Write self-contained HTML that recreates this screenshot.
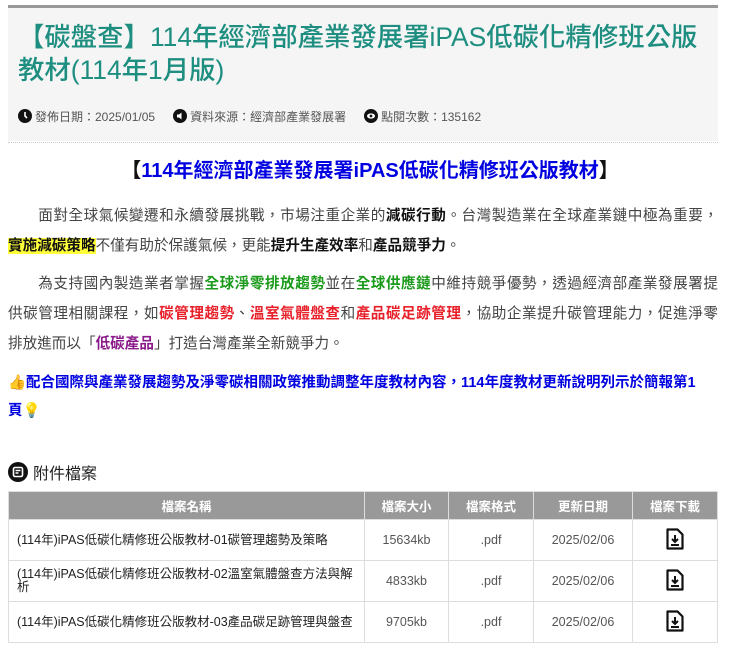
<!DOCTYPE html>
<html><head><meta charset="utf-8">
<style>
*{margin:0;padding:0;box-sizing:border-box}
body{width:740px;height:663px;background:#fff;font-family:"Liberation Sans","Noto Sans CJK TC",sans-serif;color:#333;position:relative;overflow:hidden}
.topline{position:absolute;left:8px;top:5px;width:710px;height:3px;background:#999}
.head{position:absolute;left:8px;top:8px;width:710px;height:133px;background:#f5f5f5}
.title{position:absolute;left:18px;top:21px;font-size:26.4px;line-height:33px;color:#1d8e80;font-weight:500;width:700px}
.meta{position:absolute;left:18px;top:108px;font-size:12px;color:#555;display:flex;align-items:center;height:16px}
.meta svg{margin-right:3px}
.meta span{margin-right:18px}
.dots{position:absolute;left:8px;top:142px;width:710px;border-top:1px dotted #ccc}
.h2{position:absolute;left:0;width:740px;top:157px;text-align:center;font-size:20px;font-weight:bold;color:#0000e0;line-height:28px}
.h2 b{color:#111}
.p{position:absolute;left:8px;width:710px;font-size:14.6px;color:#444}
.p div{text-align:justify;text-align-last:justify;height:30px;line-height:30px;white-space:nowrap}
.p div.l{text-align-last:left}
.k{color:#111;font-weight:bold}
.g{color:#1a9a1a;font-weight:bold}
.r{color:#e8202a;font-weight:bold}
.pu{color:#8a1a8a;font-weight:bold}
.hl{background:#ffff3a;color:#111;font-weight:bold}
.blue{position:absolute;left:8px;top:369px;width:712px;font-size:14.5px;font-weight:bold;color:#0000e0;line-height:28px}
.att{position:absolute;left:8px;top:460px;font-size:16px;color:#222;display:flex;align-items:center}
table{position:absolute;left:8px;top:491px;width:710px;border-collapse:collapse;font-size:12.5px}
th{background:#999;color:#fff;font-weight:bold;height:28px;border:1px solid #ddd;font-size:12.5px}
td{border:1px solid #ddd;height:41px;text-align:center;color:#555}
td.n{text-align:left;padding-left:8px;color:#222;line-height:13px}
</style></head><body>
<div class="topline"></div>
<div class="head"></div>
<div class="title">【碳盤查】114年經濟部產業發展署iPAS低碳化精修班公版<br>教材(114年1月版)</div>
<div class="meta">
<svg width="14" height="14" viewBox="0 0 14 14"><circle cx="7" cy="7" r="7" fill="#111"/><path d="M7 3v4l2 2" stroke="#fff" stroke-width="1.6" fill="none"/></svg><span>發佈日期：2025/01/05</span>
<svg width="14" height="14" viewBox="0 0 14 14"><circle cx="7" cy="7" r="7" fill="#111"/><path d="M4 5.5h2l2.5-2v7L6 8.5H4z" fill="#fff"/></svg><span>資料來源：經濟部產業發展署</span>
<svg width="14" height="14" viewBox="0 0 14 14"><circle cx="7" cy="7" r="7" fill="#111"/><ellipse cx="7" cy="7" rx="4" ry="2.6" fill="#fff"/><circle cx="7" cy="7" r="1.4" fill="#111"/></svg><span>點閱次數：135162</span>
</div>
<div class="dots"></div>
<div class="h2"><b>【</b>114年經濟部產業發展署iPAS低碳化精修班公版教材<b>】</b></div>
<div class="p" style="top:201px">
<div>&#12288;&#12288;面對全球氣候變遷和永續發展挑戰，市場注重企業的<span class="k">減碳行動</span>。台灣製造業在全球產業鏈中極為重要，</div>
<div class="l"><span class="hl">實施減碳策略</span>不僅有助於保護氣候，更能<span class="k">提升生產效率</span>和<span class="k">產品競爭力</span>。</div>
</div>
<div class="p" style="top:269px">
<div>&#12288;&#12288;為支持國內製造業者掌握<span class="g">全球淨零排放趨勢</span>並在<span class="g">全球供應鏈</span>中維持競爭優勢，透過經濟部產業發展署提</div>
<div>供碳管理相關課程，如<span class="r">碳管理趨勢</span>、<span class="r">溫室氣體盤查</span>和<span class="r">產品碳足跡管理</span>，協助企業提升碳管理能力，促進淨零</div>
<div class="l">排放進而以「<span class="pu">低碳產品</span>」打造台灣產業全新競爭力。</div>
</div>
<div class="blue">👍配合國際與產業發展趨勢及淨零碳相關政策推動調整年度教材內容，114年度教材更新說明列示於簡報第1<br>頁💡</div>
<div class="att"><svg width="20" height="20" viewBox="0 0 20 20" style="margin-right:5px"><circle cx="10" cy="10" r="10" fill="#111"/><rect x="5.5" y="5.5" width="9" height="9" rx="1.5" fill="none" stroke="#fff" stroke-width="1.6"/><path d="M7.5 8.5h5M7.5 11h3" stroke="#fff" stroke-width="1.4"/></svg>附件檔案</div>
<table>
<tr><th style="width:356px">檔案名稱</th><th style="width:84px">檔案大小</th><th style="width:85px">檔案格式</th><th style="width:99px">更新日期</th><th>檔案下載</th></tr>
<tr><td class="n">(114年)iPAS低碳化精修班公版教材-01碳管理趨勢及策略</td><td>15634kb</td><td>.pdf</td><td>2025/02/06</td><td><svg width="20" height="22" viewBox="0 0 20 22"><path d="M2.5 1.5h10l5 5v14h-15z" fill="none" stroke="#111" stroke-width="2.2" stroke-linejoin="round"/><path d="M10 7v7M7 11l3 3 3-3M6 17h8" stroke="#111" stroke-width="2" fill="none"/></svg></td></tr>
<tr><td class="n">(114年)iPAS低碳化精修班公版教材-02溫室氣體盤查方法與解<br>析</td><td>4833kb</td><td>.pdf</td><td>2025/02/06</td><td><svg width="20" height="22" viewBox="0 0 20 22"><path d="M2.5 1.5h10l5 5v14h-15z" fill="none" stroke="#111" stroke-width="2.2" stroke-linejoin="round"/><path d="M10 7v7M7 11l3 3 3-3M6 17h8" stroke="#111" stroke-width="2" fill="none"/></svg></td></tr>
<tr><td class="n">(114年)iPAS低碳化精修班公版教材-03產品碳足跡管理與盤查</td><td>9705kb</td><td>.pdf</td><td>2025/02/06</td><td><svg width="20" height="22" viewBox="0 0 20 22"><path d="M2.5 1.5h10l5 5v14h-15z" fill="none" stroke="#111" stroke-width="2.2" stroke-linejoin="round"/><path d="M10 7v7M7 11l3 3 3-3M6 17h8" stroke="#111" stroke-width="2" fill="none"/></svg></td></tr>
</table>
</body></html>
